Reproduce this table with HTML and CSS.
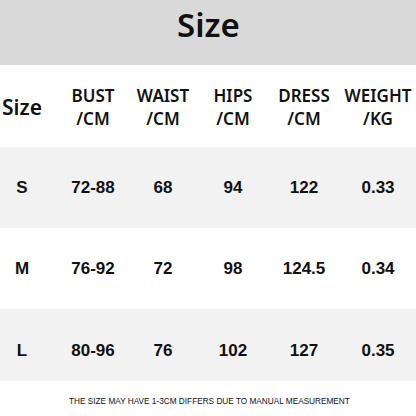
FILE: index.html
```html
<!DOCTYPE html>
<html>
<head>
<meta charset="utf-8">
<link rel="stylesheet" href="styles.css">
</head>
<body>
<div class="chart">
  <div class="title">Size</div>
  <div class="row head">
    <div class="cell first size-label">Size</div>
    <div class="cell">BUST<br>/CM</div>
    <div class="cell">WAIST<br>/CM</div>
    <div class="cell">HIPS<br>/CM</div>
    <div class="cell">DRESS<br>/CM</div>
    <div class="cell">WEIGHT<br>/KG</div>
  </div>
  <div class="row data shade">
    <div class="cell first">S</div>
    <div class="cell">72-88</div>
    <div class="cell">68</div>
    <div class="cell">94</div>
    <div class="cell">122</div>
    <div class="cell">0.33</div>
  </div>
  <div class="row data">
    <div class="cell first">M</div>
    <div class="cell">76-92</div>
    <div class="cell">72</div>
    <div class="cell">98</div>
    <div class="cell">124.5</div>
    <div class="cell">0.34</div>
  </div>
  <div class="row data shade last">
    <div class="cell first">L</div>
    <div class="cell">80-96</div>
    <div class="cell">76</div>
    <div class="cell">102</div>
    <div class="cell">127</div>
    <div class="cell">0.35</div>
  </div>
  <div class="note"><span class="note-text">THE SIZE MAY HAVE 1-3CM DIFFERS DUE TO MANUAL MEASUREMENT</span></div>
</div>
</body>
</html>
```
FILE: styles.css
```css
html, body {
  margin: 0;
  padding: 0;
  background: #ffffff;
}
.chart {
  width: 416px;
  height: 416px;
  overflow: hidden;
  color: #111111;
  display: flex;
  flex-direction: column;
}
.title {
  height: 65px;
  background: #d9d9d9;
  box-sizing: border-box;
  padding-top: 5px;
  text-align: center;
  font-family: "Noto Sans", sans-serif;
  font-weight: 600;
  font-size: 33px;
  line-height: 40px;
  padding-left: 1px;
}
.row {
  display: grid;
  grid-template-columns: 58px 70px 70px 70px 72px 76px;
  box-sizing: border-box;
}
.cell {
  text-align: center;
}
.cell.first {
  padding-right: 14px;
}
.head {
  height: 82px;
  align-items: center;
  font-family: "Noto Sans", sans-serif;
  font-weight: 600;
  font-size: 17px;
  line-height: 23px;
  padding-top: 1px;
}
.head .size-label {
  font-size: 21px;
  line-height: 26px;
}
.data {
  height: 81px;
  padding-top: 31px;
  font-family: "Liberation Sans", Arial, sans-serif;
  font-weight: bold;
  font-size: 17px;
  line-height: 20px;
}
.data.last {
  height: 72px;
  padding-top: 32px;
}
.shade {
  background: #f2f2f2;
}
.note {
  flex: 1;
  display: flex;
  align-items: center;
  justify-content: center;
  font-family: "Liberation Sans", sans-serif;
  font-size: 9px;
  line-height: 10px;
  padding-top: 5px;
  padding-left: 2px;
}
.note-text {
  display: inline-block;
  transform: scaleX(0.915);
  white-space: nowrap;
}
```
